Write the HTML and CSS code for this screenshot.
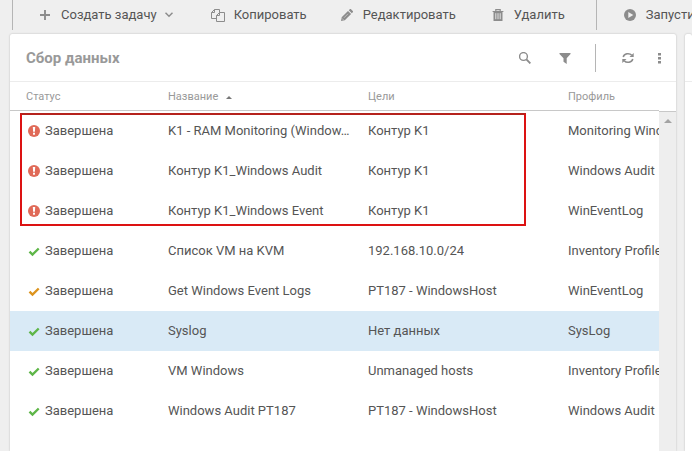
FILE: index.html
```
<!DOCTYPE html>
<html lang="ru">
<head>
<meta charset="utf-8">
<meta name="viewport" content="width=device-width, initial-scale=1">
<title>Сбор данных</title>
<link rel="stylesheet" href="styles.css">
</head>
<body>
<svg class="sprite" aria-hidden="true">
  <symbol id="error" viewBox="0 0 12 12"><circle cx="6" cy="6" r="6" fill="#e06a58"/><path d="M4.800 2h2.400l-.3 4.800H5.100z" fill="#fff"/><rect x="5" y="7.700" width="2" height="2" fill="#fff"/></symbol>
  <symbol id="check" viewBox="0 0 12 12"><path d="M1.500 6.600l3 2.900 6.200-6" fill="none" stroke="currentColor" stroke-width="2.400"/></symbol>
</svg>
<nav class="toolbar">
  <span class="divider"></span>
  <button class="tool create" type="button">
    <svg class="icon" viewBox="0 0 12 12"><path d="M6 1v10M1 6h10" stroke="#8c8c8c" stroke-width="1.900"/></svg>
    <span>Создать задачу</span>
    <svg class="caret" viewBox="0 0 8 8"><path d="M.5 1.800L4 5.200l3.500-3.400" fill="none" stroke="#8c8c8c" stroke-width="1.500"/></svg>
  </button>
  <button class="tool copy" type="button">
    <svg class="icon wide" viewBox="0 0 14 14"><path d="M5.500 10.500h-5v-6l3-3h5v3M.5 4.500h3v-3M5.500 13.500v-6l3-3h5v9zM5.500 7.500h3v-3" fill="none" stroke="#8c8c8c"/></svg>
    <span>Копировать</span>
  </button>
  <button class="tool edit" type="button">
    <svg class="icon" viewBox="0 0 12 12"><path d="M0 12l.7-3.800L7 1.900l3.100 3.100-6.300 6.300zM7.800 1.200L9 0h.8L12 2.200V3l-1.200 1.200z" fill="#8c8c8c"/><path d="M1 9.400l1.600 1.600M3 8.800l4-4" stroke="#efefef" stroke-width=".5"/></svg>
    <span>Редактировать</span>
  </button>
  <button class="tool delete" type="button">
    <svg class="icon" viewBox="0 0 12 12"><path d="M3.800 2V.6h4.400V2M.6 2.500h10.800" fill="none" stroke="#8c8c8c" stroke-width="1.200"/><path d="M1.500 3h9v9h-9z" fill="#8c8c8c"/><path d="M3.800 4.200v6M6 4.200v6M8.200 4.200v6" stroke="#efefef" stroke-width=".9"/></svg>
    <span>Удалить</span>
  </button>
  <span class="divider"></span>
  <button class="tool run" type="button">
    <svg class="icon" viewBox="0 0 12 12"><circle cx="6" cy="6" r="6" fill="#8c8c8c"/><path d="M4.300 3l5 3-5 3z" fill="#efefef"/></svg>
    <span>Запустить</span>
  </button>
</nav>
<main class="content">
  <section class="panel tasks">
    <header class="panel-head">
      <h1>Сбор данных</h1>
      <div class="actions">
        <button type="button" aria-label="Поиск"><svg viewBox="0 0 12 12"><circle cx="4.500" cy="4.500" r="3.900" fill="none" stroke="#8c8c8c" stroke-width="1.400"/><path d="M7.400 7.400l4 4" stroke="#8c8c8c" stroke-width="1.900"/></svg></button>
        <button type="button" aria-label="Фильтр"><svg viewBox="0 0 12 12"><path d="M.5 1h11v1L7.700 6.300V12l-3.200-2.200V6.300L.5 2z" fill="#8c8c8c"/></svg></button>
        <span class="divider"></span>
        <button type="button" aria-label="Обновить"><svg viewBox="0 0 12 12"><path d="M1.200 5a4.900 4.300 0 0 1 8.600-1.700M10.800 7a4.900 4.300 0 0 1-8.600 1.700" fill="none" stroke="#8c8c8c" stroke-width="1.500"/><path d="M11.700 1v4H7.500zM.3 11V7h4.200z" fill="#8c8c8c"/></svg></button>
        <button class="more" type="button" aria-label="Ещё"><svg viewBox="0 0 12 12"><path d="M4 1h3v2.600H4zM4 5h3v2.600H4zM4 9h3v2.600H4z" fill="#8c8c8c"/></svg></button>
      </div>
    </header>
    <div class="grid">
      <div class="viewport">
        <table>
          <colgroup><col class="col-status"><col class="col-data"><col class="col-data"><col class="col-data"></colgroup>
          <thead><tr><th>Статус</th><th>Название<span class="sort"></span></th><th>Цели</th><th>Профиль</th></tr></thead>
          <tbody>
            <tr><td><span class="status"><svg><use href="#error"/></svg>Завершена</span></td><td>K1 - RAM Monitoring (Window…</td><td>Контур K1</td><td>Monitoring Windows</td></tr>
            <tr><td><span class="status"><svg><use href="#error"/></svg>Завершена</span></td><td>Контур K1_Windows Audit</td><td>Контур K1</td><td>Windows Audit</td></tr>
            <tr><td><span class="status"><svg><use href="#error"/></svg>Завершена</span></td><td>Контур K1_Windows Event</td><td>Контур K1</td><td>WinEventLog</td></tr>
            <tr><td><span class="status ok"><svg><use href="#check"/></svg>Завершена</span></td><td>Список VM на KVM</td><td>192.168.10.0/24</td><td>Inventory Profile</td></tr>
            <tr><td><span class="status warn"><svg><use href="#check"/></svg>Завершена</span></td><td>Get Windows Event Logs</td><td>PT187 - WindowsHost</td><td>WinEventLog</td></tr>
            <tr class="selected"><td><span class="status ok"><svg><use href="#check"/></svg>Завершена</span></td><td>Syslog</td><td>Нет данных</td><td>SysLog</td></tr>
            <tr><td><span class="status ok"><svg><use href="#check"/></svg>Завершена</span></td><td>VM Windows</td><td>Unmanaged hosts</td><td>Inventory Profile</td></tr>
            <tr><td><span class="status ok"><svg><use href="#check"/></svg>Завершена</span></td><td>Windows Audit PT187</td><td>PT187 - WindowsHost</td><td>Windows Audit</td></tr>
          </tbody>
        </table>
      </div>
      <div class="scroll"><div class="track"><span class="arrow"></span></div></div>
      <div class="highlight"></div>
    </div>
  </section>
  <aside class="panel details"><div class="panel-head"></div></aside>
</main>
</body>
</html>
```
FILE: styles.css
```
* { box-sizing: border-box; }
body {
  margin: 0;
  height: 100vh;
  display: flex;
  flex-direction: column;
  overflow: hidden;
  background: #efefef;
  color: #555;
  font: 13px/20px Roboto, sans-serif;
}
.sprite { position: absolute; width: 0; height: 0; }
button { border: 0; padding: 0; background: none; color: inherit; font: inherit; cursor: pointer; }
svg { display: block; flex: none; }
.divider { flex: none; width: 1px; height: 28px; background: #b5b5b5; }

.toolbar { display: flex; align-items: center; flex: none; height: 34px; padding: 0 0 4px 12px; }
.toolbar .divider { height: 30px; }
.tool { display: flex; align-items: center; flex: none; white-space: nowrap; }
.icon { width: 12px; height: 12px; margin-right: 10px; }
.icon.wide { width: 14px; height: 14px; margin-right: 9px; }
.caret { width: 8px; height: 8px; margin-left: 8px; }
.create { margin-left: 26px; }
.copy { margin-left: 38px; }
.edit { margin-left: 34px; }
.delete { margin-left: 36px; }
.delete + .divider { margin-left: 31px; }
.run { margin-left: 27px; }

.content { display: flex; flex: 1; gap: 9px; min-height: 0; padding-left: 10px; }
.panel { background: #fff; border-radius: 2px 2px 0 0; box-shadow: 0 0 2px rgba(0, 0, 0, .25); }
.tasks { flex: 1; display: flex; flex-direction: column; min-width: 0; }
.details { flex: none; width: 7px; }
.panel-head {
  display: flex;
  align-items: center;
  justify-content: space-between;
  flex: none;
  height: 48px;
  border-bottom: 1px solid #ececec;
}
.tasks .panel-head { padding: 0 10px 0 16px; }
h1 { margin: 0; color: #999; font-size: 15px; font-weight: 700; }
.actions { display: flex; align-items: center; }
.actions button { width: 12px; height: 12px; margin-right: 28px; }
.actions svg { width: 12px; height: 12px; }
.actions .divider { margin: 0 26px 0 -4px; }
.actions .divider + button { margin-right: 20px; }
.actions .more { margin-right: 0; }

.grid { position: relative; display: flex; flex: 1; min-height: 0; }
.viewport { flex: 1; min-width: 0; overflow: hidden; }
table { width: 742px; table-layout: fixed; border-collapse: separate; border-spacing: 0; }
.col-status { width: 142px; }
.col-data { width: 200px; }
th {
  height: 29px;
  padding: 2px 0 0 16px;
  border-bottom: 1px solid #c8c8c8;
  color: #999;
  font-size: 11px;
  font-weight: 400;
  text-align: left;
}
td { height: 40px; padding: 0 0 0 16px; overflow: hidden; text-overflow: ellipsis; white-space: nowrap; }
.selected td { background: #d9eaf6; }
.sort {
  display: inline-block;
  margin-left: 8px;
  vertical-align: 1px;
  border: 3px solid transparent;
  border-top: 0;
  border-bottom-color: #777;
}
.status { display: flex; align-items: center; gap: 5px; padding-left: 2px; }
.status svg { width: 12px; height: 12px; }
.ok svg { color: #5eb648; }
.warn svg { color: #dc941e; }
.scroll { display: flex; flex-direction: column; width: 17px; }
.scroll::before { content: ""; height: 29px; border-bottom: 1px solid #c8c8c8; }
.track { flex: 1; background: #eee; }
.arrow { display: block; width: 8px; margin: 7px auto; border: 4px solid transparent; border-top: 0; border-bottom-color: #a3a3a3; }
.highlight { position: absolute; top: 31px; left: 10px; width: 506px; height: 113px; border: 2px solid #dc1212; border-top-color: #b5221c; pointer-events: none; }
```
